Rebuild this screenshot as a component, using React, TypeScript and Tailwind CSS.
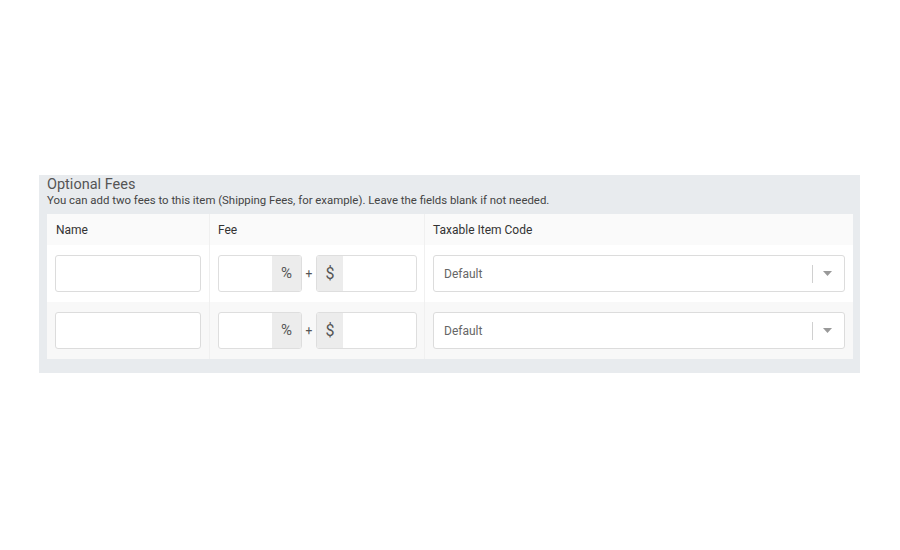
const font = { fontFamily: "Roboto, 'Liberation Sans', sans-serif" };

function FeeInputs() {
  return (
    <div className="flex items-center">
      <div className="flex h-[37px] w-[84px] overflow-hidden rounded-[3px] border border-[#dedede] bg-white">
        <div className="flex-1" />
        <div className="flex w-[29px] items-center justify-center bg-[#ececec] text-[15px] text-[#555]">%</div>
      </div>
      <span className="w-[14px] text-center text-[12px] text-[#555]">+</span>
      <div className="flex h-[37px] w-[101px] overflow-hidden rounded-[3px] border border-[#dedede] bg-white">
        <div className="flex w-[26px] items-center justify-center bg-[#ececec] text-[16px] text-[#555]">$</div>
        <div className="flex-1" />
      </div>
    </div>
  );
}

function SelectBox() {
  return (
    <div className="flex h-[37px] w-full items-center rounded-[3px] border border-[#dcdcdc] bg-white pl-[10px] pr-[12px]">
      <span className="flex-1 text-[12px] text-[#666]">Default</span>
      <div className="mr-[10px] h-[18px] w-px bg-[#d0d0d0]" />
      <svg width="9" height="5" viewBox="0 0 9 5">
        <path d="M0 0 L9 0 L4.5 5 Z" fill="#999" />
      </svg>
    </div>
  );
}

function FeeRow({ shaded }: { shaded?: boolean }) {
  return (
    <div className={`grid h-[57px] grid-cols-[163px_215px_1fr] ${shaded ? "bg-[#f8f8f8]" : "bg-white"}`}>
      <div className="flex items-center border-r border-[#f0f0f0] px-[8px]">
        <div className="h-[37px] w-full rounded-[3px] border border-[#dcdcdc] bg-white" />
      </div>
      <div className="flex items-center border-r border-[#f0f0f0] px-[8px]">
        <FeeInputs />
      </div>
      <div className="flex items-center px-[8px]">
        <SelectBox />
      </div>
    </div>
  );
}

export default function App() {
  return (
    <div className="flex h-[550px] w-[900px] flex-col bg-white" style={font}>
      <div className="ml-[39px] mt-[175px] w-[821px] bg-[#e8ebee] px-[8px] pb-[14px] pt-[2px]">
        <h2 className="text-[14.5px] leading-[16px] text-[#555]">Optional Fees</h2>
        <p className="text-[11.4px] leading-[14px] text-[#444]">
          You can add two fees to this item (Shipping Fees, for example). Leave the fields blank if not needed.
        </p>
        <div className="mt-[7px] w-[806px]">
          <div className="grid h-[31px] grid-cols-[163px_215px_1fr] bg-[#fafafa] text-[12px] text-[#333]">
            <div className="flex items-center border-r border-[#f0f0f0] px-[9px]">Name</div>
            <div className="flex items-center border-r border-[#f0f0f0] px-[8px]">Fee</div>
            <div className="flex items-center px-[8px]">Taxable Item Code</div>
          </div>
          <FeeRow />
          <FeeRow shaded />
        </div>
      </div>
    </div>
  );
}
